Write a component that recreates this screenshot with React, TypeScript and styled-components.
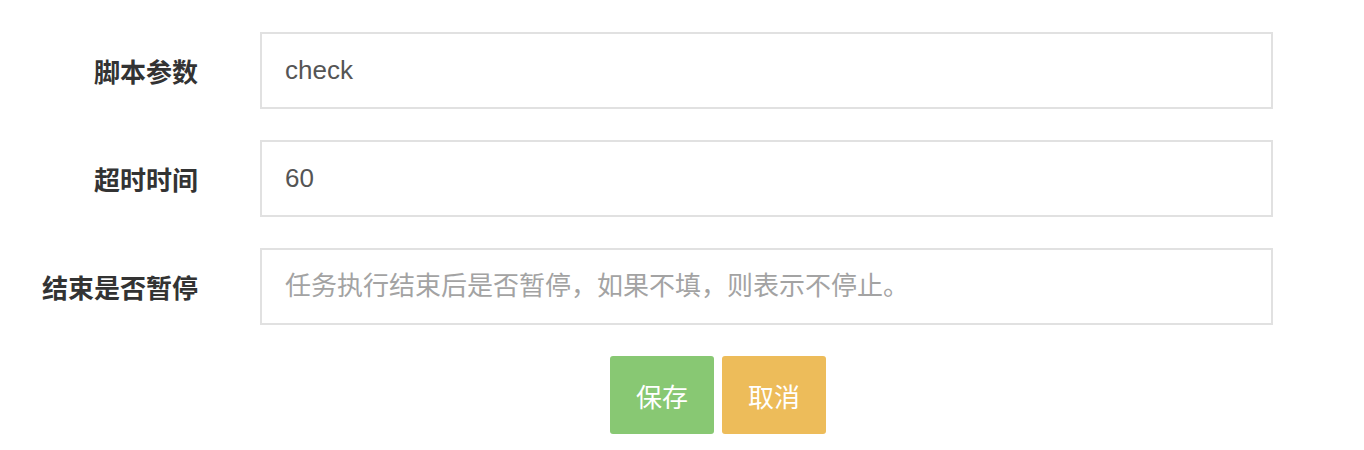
import React from "react";
import styled, { createGlobalStyle } from "styled-components";

const Global = createGlobalStyle`
  html, body { margin: 0; padding: 0; background: #fff; }
  body { font-family: "Liberation Sans", "Noto Sans CJK SC", sans-serif; }
  * { box-sizing: border-box; }
`;

const Form = styled.div`
  display: grid;
  grid-template-columns: 198px 1013px;
  column-gap: 62px;
  row-gap: 31px;
  padding-top: 32px;
`;

const Label = styled.label`
  justify-self: end;
  align-self: center;
  font-size: 26px;
  font-weight: bold;
  color: #333;
  white-space: nowrap;
`;

const Input = styled.input`
  height: 77px;
  width: 100%;
  border: 2px solid #e1e1e1;
  border-radius: 0;
  padding: 0 23px;
  font-family: "Liberation Sans", "Noto Sans CJK SC", sans-serif;
  font-size: 26px;
  color: #555;
  outline: none;
  &::placeholder { color: #a3a3a3; }
`;

const Actions = styled.div`
  grid-column: 2;
  display: flex;
  gap: 8px;
  padding-left: 350px;
`;

const Button = styled.button<{ $bg: string }>`
  width: 104px;
  height: 78px;
  border: none;
  border-radius: 3px;
  background: ${(p) => p.$bg};
  color: #fff;
  font-family: "Liberation Sans", "Noto Sans CJK SC", sans-serif;
  font-size: 26px;
  cursor: pointer;
`;

export default function App() {
  return (
    <>
      <Global />
      <Form>
        <Label>脚本参数</Label>
        <Input defaultValue="check" />
        <Label>超时时间</Label>
        <Input defaultValue="60" />
        <Label>结束是否暂停</Label>
        <Input placeholder="任务执行结束后是否暂停，如果不填，则表示不停止。" />
        <Actions>
          <Button $bg="#88c873">保存</Button>
          <Button $bg="#edbc5a">取消</Button>
        </Actions>
      </Form>
    </>
  );
}
